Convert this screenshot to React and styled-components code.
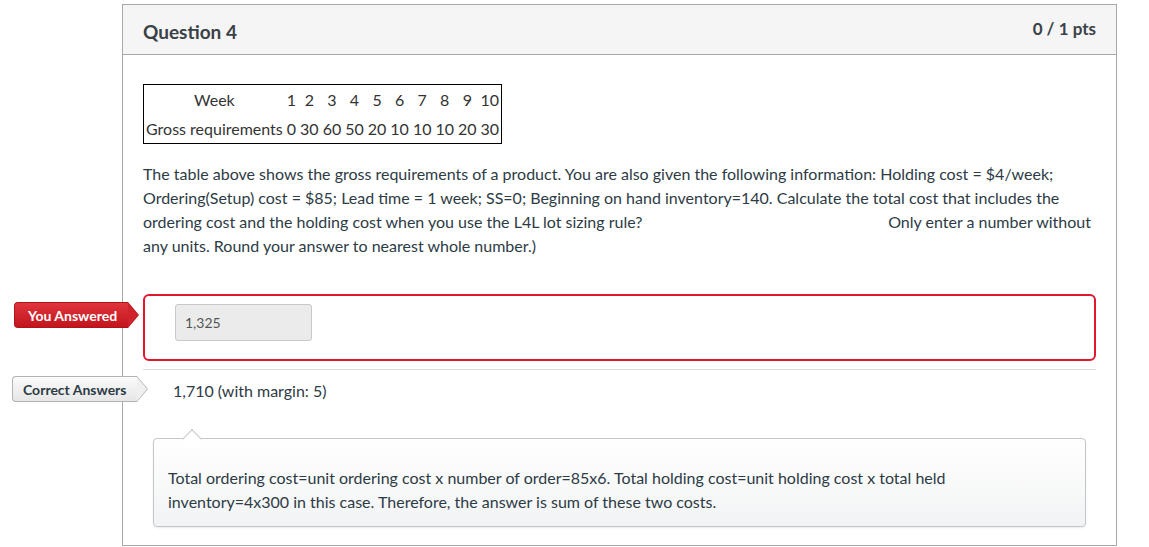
import React from 'react'
import styled, { createGlobalStyle } from 'styled-components'

const GlobalStyle = createGlobalStyle`
  body {
    margin: 0;
    background: #ffffff;
    font-family: Lato, "Liberation Sans", sans-serif;
    color: #2d3b45;
  }
`

const Page = styled.div`
  padding: 4px 0 0 122px;
  width: 995px;
`

const Card = styled.div`
  position: relative;
  border: 1px solid #a8a8a8;
  background: #fff;
  height: 542px;
  box-sizing: border-box;
`

const Header = styled.div`
  display: flex;
  justify-content: space-between;
  background: #f5f5f5;
  border-bottom: 1px solid #a8a8a8;
  height: 50px;
  box-sizing: border-box;
  padding: 0 20px;
`

const Title = styled.h2`
  margin: 0;
  padding-top: 15px;
  font-size: 19px;
  font-weight: 700;
  color: #3a4147;
`

const Points = styled.div`
  padding-top: 13px;
  font-size: 17px;
  font-weight: 700;
  color: #3a4147;
`

const Body = styled.div`
  padding: 29px 20px 0 20px;
`

const DataTable = styled.table`
  border: 1px solid #000;
  border-collapse: collapse;
  font-size: 16px;
  color: #333;
  td {
    padding: 0 2px;
    height: 29px;
    text-align: center;
  }
`

const Prompt = styled.div`
  margin-top: 18px;
  font-size: 16px;
  line-height: 24px;
  width: 952px;
`

const Line = styled.div`
  display: flex;
  justify-content: space-between;
  padding-right: 4px;
`

const AnswerRow = styled.div`
  position: relative;
  margin-top: 36px;
`

const Tag = styled.div`
  position: absolute;
  left: ${p => p.$left}px;
  top: ${p => p.$top}px;
  height: 26px;
  width: ${p => p.$width}px;
  display: flex;
  align-items: center;
  padding-left: ${p => p.$pad}px;
  box-sizing: border-box;
  font-size: 14px;
  font-weight: 700;
  color: ${p => (p.$red ? '#fff' : '#2d3b45')};
  background: ${p =>
    p.$red
      ? 'linear-gradient(#e0353d, #c2151e)'
      : 'linear-gradient(#fbfbfb, #e6e6e6)'};
  border: 1px solid ${p => (p.$red ? '#b0141b' : '#b3b3b3')};
  border-right: none;
  border-radius: 4px 0 0 4px;
  &::before {
    content: '';
    position: absolute;
    right: -11px;
    top: -1px;
    width: 0;
    height: 0;
    border-top: 13px solid transparent;
    border-bottom: 13px solid transparent;
    border-left: 11px solid ${p => (p.$red ? '#b8161e' : '#b3b3b3')};
  }
  &::after {
    content: '';
    position: absolute;
    right: -10px;
    top: 0;
    width: 0;
    height: 0;
    border-top: 12px solid transparent;
    border-bottom: 12px solid transparent;
    border-left: 10px solid ${p => (p.$red ? '#cf242c' : '#efefef')};
  }
`

const AnswerBox = styled.div`
  border: 2px solid #e0172d;
  border-radius: 6px;
  height: 67px;
  box-sizing: border-box;
  padding: 8px 0 0 30px;
`

const Input = styled.div`
  width: 137px;
  height: 37px;
  box-sizing: border-box;
  background: #ebebeb;
  border: 1px solid #c8c8c8;
  border-radius: 3px;
  font-size: 14px;
  color: #555;
  display: flex;
  align-items: center;
  padding-left: 9px;
`

const Divider = styled.div`
  margin-top: 8px;
  border-top: 1px solid #dcdcdc;
`

const CorrectRow = styled.div`
  position: relative;
  height: 40px;
  display: flex;
  align-items: center;
  padding-left: 30px;
  font-size: 16px;
`

const Comment = styled.div`
  position: relative;
  margin: 28px 10px 0 10px;
  height: 89px;
  box-sizing: border-box;
  border: 1px solid #c3c7ca;
  border-radius: 4px;
  background: linear-gradient(#ffffff, #f2f3f4);
  box-shadow: 0 1px 2px rgba(0, 0, 0, 0.08);
  padding: 27px 14px 0 14px;
  font-size: 16px;
  line-height: 24px;
  &::before {
    content: '';
    position: absolute;
    left: 31px;
    top: -7px;
    width: 13px;
    height: 13px;
    background: #fff;
    border-top: 1px solid #c3c7ca;
    border-left: 1px solid #c3c7ca;
    transform: rotate(45deg);
  }
`

const weeks = ['1', '2', '3', '4', '5', '6', '7', '8', '9', '10']
const gross = ['0', '30', '60', '50', '20', '10', '10', '10', '20', '30']

export default function App() {
  return (
    <>
      <GlobalStyle />
      <Page>
        <Card>
          <Header>
            <Title>Question 4</Title>
            <Points>0 / 1 pts</Points>
          </Header>
          <Body>
            <DataTable>
              <tbody>
                <tr>
                  <td>Week</td>
                  {weeks.map(w => <td key={w}>{w}</td>)}
                </tr>
                <tr>
                  <td>Gross requirements</td>
                  {gross.map((g, i) => <td key={i}>{g}</td>)}
                </tr>
              </tbody>
            </DataTable>
            <Prompt>
              <div>The table above shows the gross requirements of a product. You are also given the following information: Holding cost = $4/week;</div>
              <div>Ordering(Setup) cost = $85; Lead time = 1 week; SS=0; Beginning on hand inventory=140. Calculate the total cost that includes the</div>
              <Line>
                <span>ordering cost and the holding cost when you use the L4L lot sizing rule?</span>
                <span>Only enter a number without</span>
              </Line>
              <div>any units. Round your answer to nearest whole number.)</div>
            </Prompt>
            <AnswerRow>
              <Tag $red $left={-129} $top={8} $width={114} $pad={13}>You Answered</Tag>
              <AnswerBox>
                <Input>1,325</Input>
              </AnswerBox>
            </AnswerRow>
            <Divider />
            <CorrectRow>
              <Tag $left={-131} $top={6} $width={125} $pad={10}>Correct Answers</Tag>
              1,710 (with margin: 5)
            </CorrectRow>
            <Comment>
              Total ordering cost=unit ordering cost x number of order=85x6. Total holding cost=unit holding cost x total held
              <br />
              inventory=4x300 in this case. Therefore, the answer is sum of these two costs.
            </Comment>
          </Body>
        </Card>
      </Page>
    </>
  )
}
